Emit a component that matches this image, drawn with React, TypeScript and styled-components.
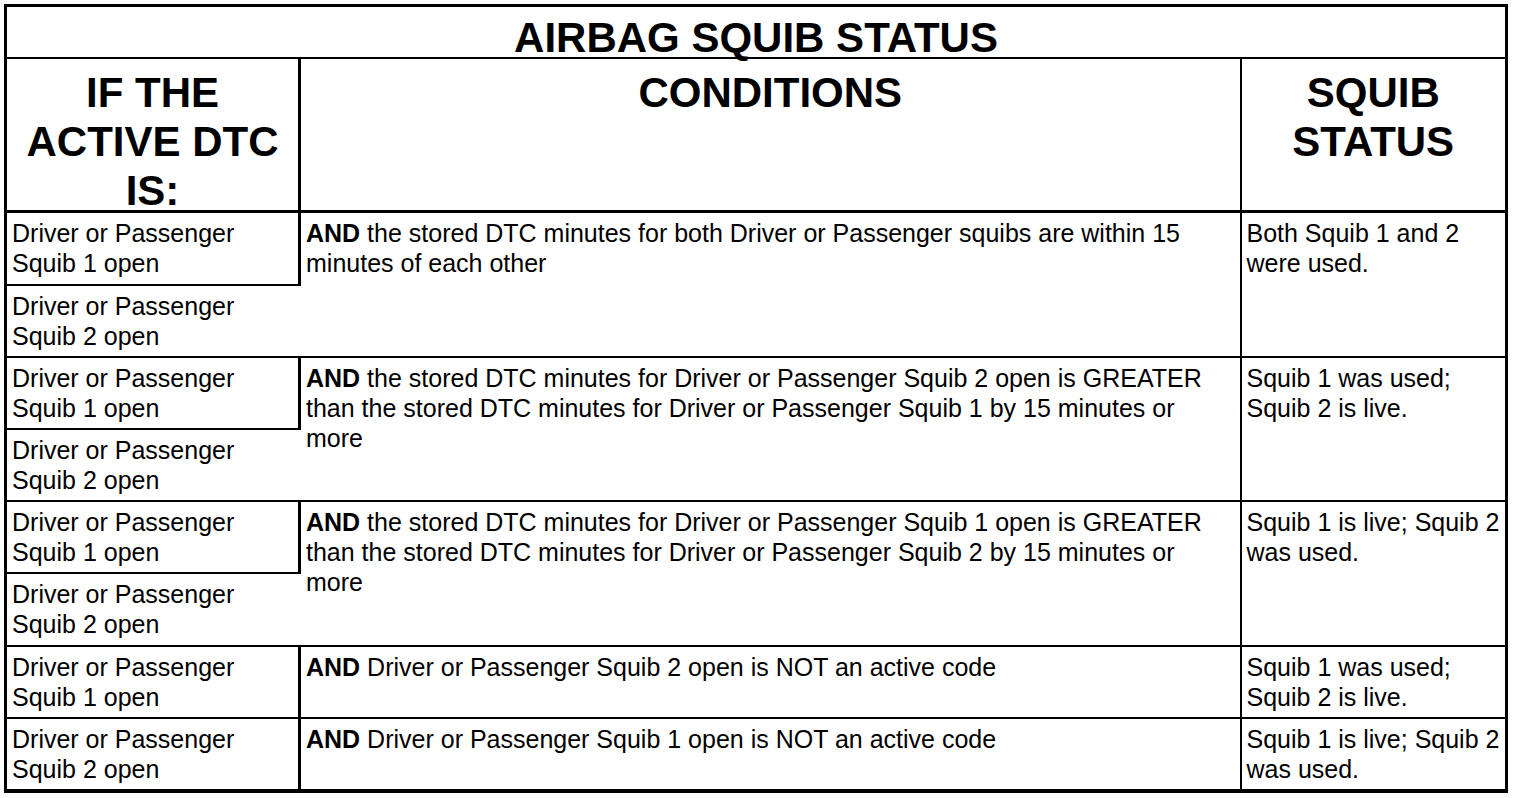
import React from "react";
import styled, { createGlobalStyle } from "styled-components";

const Global = createGlobalStyle`
  html, body { margin: 0; padding: 0; background: #fff; }
  body { font-family: "Liberation Sans", Arial, Helvetica, sans-serif; color: #000; }
`;

const Page = styled.div`
  padding: 4px 0 0 4px;
`;

const Table = styled.table`
  border-collapse: collapse;
  table-layout: fixed;
  width: 1504px;
  border: 3px solid #000;
  border-bottom-width: 4px;
`;

const TitleCell = styled.th`
  border-bottom: 2px solid #000;
  padding: 0;
  vertical-align: top;
`;

const TitleText = styled.div`
  font-size: 42px;
  font-weight: 700;
  line-height: 38px;
  padding-top: 12px;
  text-align: center;
  height: 50px;
  box-sizing: border-box;
`;

const HeadCell = styled.th<{ $rule?: number }>`
  border-right: ${(p) => p.$rule ?? 2}px solid #000;
  border-bottom: 3px solid #000;
  padding: 0;
  vertical-align: top;
  &:last-child { border-right: none; }
`;

const HeadText = styled.div`
  height: 151px;
  box-sizing: border-box;
  padding-top: 9px;
  font-size: 42px;
  font-weight: 700;
  line-height: 49px;
  text-align: center;
`;

const Cell = styled.td<{ $rule?: number }>`
  border-right: ${(p) => p.$rule ?? 2}px solid #000;
  border-bottom: 2px solid #000;
  padding: 0;
  vertical-align: top;
  &:last-child { border-right: none; }
`;

const CellText = styled.div<{ $h: number }>`
  height: ${(p) => p.$h}px;
  box-sizing: border-box;
  padding: 5px 5px 0 5px;
  font-size: 25px;
  line-height: 30px;
  white-space: nowrap;
`;

const Strong = styled.b`
  font-weight: 700;
`;

type Group = {
  dtcs: string[][];
  heights: number[];
  cond: React.ReactNode;
  status: string[];
};

const lines = (arr: string[]) =>
  arr.map((l, i) => (
    <React.Fragment key={i}>
      {i > 0 && <br />}
      {l}
    </React.Fragment>
  ));

const D1 = ["Driver or Passenger", "Squib 1 open"];
const D2 = ["Driver or Passenger", "Squib 2 open"];

const groups: Group[] = [
  {
    dtcs: [D1, D2],
    heights: [71, 70],
    cond: (
      <>
        <Strong>AND</Strong> the stored DTC minutes for both Driver or Passenger squibs are within 15
        <br />
        minutes of each other
      </>
    ),
    status: ["Both Squib 1 and 2", "were used."],
  },
  {
    dtcs: [D1, D2],
    heights: [70, 70],
    cond: (
      <>
        <Strong>AND</Strong> the stored DTC minutes for Driver or Passenger Squib 2 open is GREATER
        <br />
        than the stored DTC minutes for Driver or Passenger Squib 1 by 15 minutes or
        <br />
        more
      </>
    ),
    status: ["Squib 1 was used;", "Squib 2 is live."],
  },
  {
    dtcs: [D1, D2],
    heights: [70, 71],
    cond: (
      <>
        <Strong>AND</Strong> the stored DTC minutes for Driver or Passenger Squib 1 open is GREATER
        <br />
        than the stored DTC minutes for Driver or Passenger Squib 2 by 15 minutes or
        <br />
        more
      </>
    ),
    status: ["Squib 1 is live; Squib 2", "was used."],
  },
  {
    dtcs: [D1],
    heights: [70],
    cond: (
      <>
        <Strong>AND</Strong> Driver or Passenger Squib 2 open is NOT an active code
      </>
    ),
    status: ["Squib 1 was used;", "Squib 2 is live."],
  },
  {
    dtcs: [D2],
    heights: [70],
    cond: (
      <>
        <Strong>AND</Strong> Driver or Passenger Squib 1 open is NOT an active code
      </>
    ),
    status: ["Squib 1 is live; Squib 2", "was used."],
  },
];

export default function App() {
  return (
    <Page>
      <Global />
      <Table>
        <colgroup>
          <col style={{ width: 294 }} />
          <col style={{ width: 941 }} />
          <col />
        </colgroup>
        <thead>
          <tr>
            <TitleCell colSpan={3}>
              <TitleText>AIRBAG SQUIB STATUS</TitleText>
            </TitleCell>
          </tr>
          <tr>
            <HeadCell $rule={3}>
              <HeadText>
                IF THE
                <br />
                ACTIVE DTC
                <br />
                IS:
              </HeadText>
            </HeadCell>
            <HeadCell>
              <HeadText>CONDITIONS</HeadText>
            </HeadCell>
            <HeadCell>
              <HeadText>
                SQUIB
                <br />
                STATUS
              </HeadText>
            </HeadCell>
          </tr>
        </thead>
        <tbody>
          {groups.map((g, gi) => {
            const spanH =
              g.heights.reduce((a, b) => a + b, 0) + (g.heights.length - 1) * 2;
            return g.dtcs.map((d, di) => (
              <tr key={`${gi}-${di}`}>
                <Cell $rule={3}>
                  <CellText $h={g.heights[di]}>{lines(d)}</CellText>
                </Cell>
                {di === 0 && (
                  <>
                    <Cell rowSpan={g.dtcs.length}>
                      <CellText $h={spanH}>{g.cond}</CellText>
                    </Cell>
                    <Cell rowSpan={g.dtcs.length}>
                      <CellText $h={spanH}>{lines(g.status)}</CellText>
                    </Cell>
                  </>
                )}
              </tr>
            ));
          })}
        </tbody>
      </Table>
    </Page>
  );
}
